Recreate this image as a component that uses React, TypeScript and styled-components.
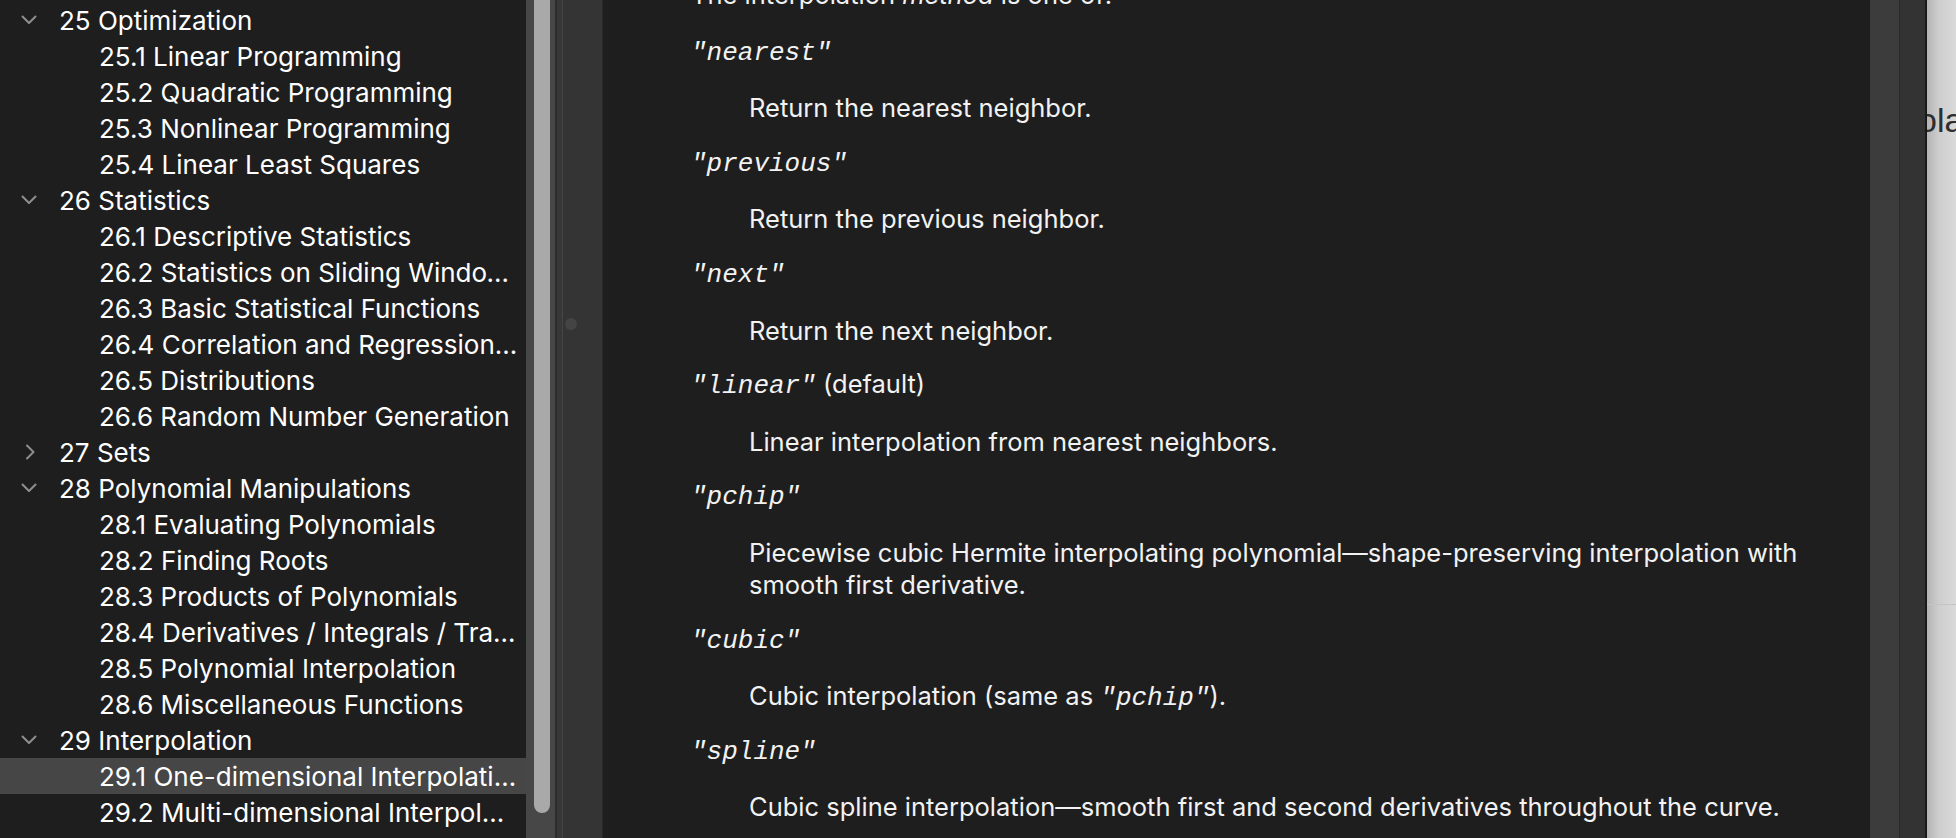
import styled, { createGlobalStyle } from "styled-components";
import type { ReactNode } from "react";
import { Fragment } from "react";

type TocItem = {
  label: string;
  level: 1 | 2;
  open?: boolean;
  selected?: boolean;
};

const TOC: TocItem[] = [
  { label: "25 Optimization", level: 1, open: true },
  { label: "25.1 Linear Programming", level: 2 },
  { label: "25.2 Quadratic Programming", level: 2 },
  { label: "25.3 Nonlinear Programming", level: 2 },
  { label: "25.4 Linear Least Squares", level: 2 },
  { label: "26 Statistics", level: 1, open: true },
  { label: "26.1 Descriptive Statistics", level: 2 },
  { label: "26.2 Statistics on Sliding Windows of Data", level: 2 },
  { label: "26.3 Basic Statistical Functions", level: 2 },
  { label: "26.4 Correlation and Regression Analysis", level: 2 },
  { label: "26.5 Distributions", level: 2 },
  { label: "26.6 Random Number Generation", level: 2 },
  { label: "27 Sets", level: 1, open: false },
  { label: "28 Polynomial Manipulations", level: 1, open: true },
  { label: "28.1 Evaluating Polynomials", level: 2 },
  { label: "28.2 Finding Roots", level: 2 },
  { label: "28.3 Products of Polynomials", level: 2 },
  { label: "28.4 Derivatives / Integrals / Transforms", level: 2 },
  { label: "28.5 Polynomial Interpolation", level: 2 },
  { label: "28.6 Miscellaneous Functions", level: 2 },
  { label: "29 Interpolation", level: 1, open: true },
  { label: "29.1 One-dimensional Interpolation", level: 2, selected: true },
  { label: "29.2 Multi-dimensional Interpolation", level: 2 },
  { label: "30 Geometry", level: 1, open: false },
];

const GlobalStyle = createGlobalStyle`
  html, body {
    margin: 0;
    padding: 0;
    background: #1e1e1e;
  }
  body {
    width: 1956px;
    height: 838px;
    overflow: hidden;
  }
`;

const Window = styled.div`
  display: flex;
  width: 1956px;
  height: 838px;
  overflow: hidden;
  background: #1e1e1e;
`;

/* ---------- table of contents ---------- */

const Sidebar = styled.nav`
  width: 526px;
  flex: none;
  box-sizing: border-box;
  padding-top: 2px;
  overflow: hidden;
  background: #1e1e1e;
  font-family: Inter, "Noto Sans", sans-serif;
  font-size: 26px;
  color: #ffffff;
`;

const Row = styled.div<{ $level: number; $selected?: boolean }>`
  display: flex;
  align-items: center;
  height: 36px;
  box-sizing: border-box;
  padding-left: ${(p) => (p.$level === 1 ? 21 : 99)}px;
  padding-right: 8px;
  background: ${(p) => (p.$selected ? "#464646" : "transparent")};
`;

const Twisty = styled.span`
  width: 16px;
  flex: none;
  display: flex;
  justify-content: center;
  align-items: center;
  margin-right: 22px;
`;

const Label = styled.span`
  flex: 1;
  min-width: 0;
  white-space: nowrap;
  overflow: hidden;
  text-overflow: ellipsis;
`;

const Chevron = ({ open }: { open?: boolean }) =>
  open ? (
    <svg width="16" height="10" viewBox="0 0 16 10">
      <polyline
        points="1.5,1.5 8,8 14.5,1.5"
        fill="none"
        stroke="#8e8e8e"
        strokeWidth="2"
        strokeLinecap="round"
        strokeLinejoin="round"
      />
    </svg>
  ) : (
    <svg width="11" height="16" viewBox="0 0 11 16" style={{ marginLeft: 3 }}>
      <polyline
        points="2,1.5 8.5,8 2,14.5"
        fill="none"
        stroke="#8e8e8e"
        strokeWidth="2"
        strokeLinecap="round"
        strokeLinejoin="round"
      />
    </svg>
  );

/* ---------- scroll bar and splitter ---------- */

const ScrollTrack = styled.div`
  width: 29px;
  flex: none;
  box-sizing: border-box;
  padding: 0 5px 25px 8px;
  display: flex;
  flex-direction: column;
  justify-content: flex-end;
  overflow: hidden;
  background: #474747;
`;

const ScrollThumb = styled.div`
  height: 900px;
  flex: none;
  background: #a9a9a9;
  border-radius: 0 0 8px 8px;
`;

const Splitter = styled.div`
  width: 48px;
  flex: none;
  box-sizing: border-box;
  border-left: 2px solid #2c2c2c;
  border-right: 1px solid #2a2a2a;
  padding: 318px 0 0 8px;
  background: linear-gradient(
    to right,
    #373737 0,
    #373737 5px,
    #444444 5px,
    #444444 6px,
    #343434 6px
  );
`;

const Grip = styled.div`
  width: 12px;
  height: 12px;
  border-radius: 50%;
  background: #444444;
`;

/* ---------- document ---------- */

const Content = styled.main`
  flex: 1;
  min-width: 0;
  overflow: hidden;
  box-sizing: border-box;
  padding: 0 30px 0 88px;
  background: #1e1e1e;
  font-family: Inter, "Liberation Sans", sans-serif;
  font-size: 25.5px;
  line-height: 32px;
  color: #f2f2f2;
`;

const Flow = styled.div`
  display: flex;
  flex-direction: column;
  gap: 23.6px;
  margin-top: -21px;
`;

const Para = styled.p`
  margin: 0;
`;

const Term = styled.div`
  margin: 0;
`;

const Desc = styled.div`
  margin: 0 0 -2px 58px;
  padding-top: 2px;
`;

const Code = styled.code`
  font-family: "Liberation Mono", "DejaVu Sans Mono", monospace;
  font-style: italic;
  font-size: 26px;
  line-height: 1;
`;

/* ---------- right edge ---------- */

const Gutter = styled.div<{ $width: number; $bg: string; $edge: string; $edgeWidth: number }>`
  width: ${(p) => p.$width}px;
  flex: none;
  box-sizing: border-box;
  background: ${(p) => p.$bg};
  border-right: ${(p) => p.$edgeWidth}px solid ${(p) => p.$edge};
`;

const Backdrop = styled.div`
  width: 29px;
  flex: none;
  overflow: hidden;
  display: flex;
  flex-direction: column;
  background: linear-gradient(to right, #b4b4b4 0, #cecece 12px, #dadada 29px);
`;

const BackdropTitle = styled.div`
  margin: 100px 0 0 -9px;
  white-space: nowrap;
  font-family: "Liberation Sans", Arial, sans-serif;
  font-size: 34px;
  line-height: 40px;
  color: #2e2e2e;
`;

const BackdropRule = styled.div`
  height: 1px;
  margin-top: 464px;
  background: #c4c4c4;
`;

type Method = { key: string; note?: string; desc: ReactNode };

const METHODS: Method[] = [
  { key: "nearest", desc: "Return the nearest neighbor." },
  { key: "previous", desc: "Return the previous neighbor." },
  { key: "next", desc: "Return the next neighbor." },
  { key: "linear", note: "(default)", desc: "Linear interpolation from nearest neighbors." },
  {
    key: "pchip",
    desc: "Piecewise cubic Hermite interpolating polynomial\u2014shape-preserving interpolation with smooth first derivative.",
  },
  {
    key: "cubic",
    desc: (
      <>
        Cubic interpolation (same as <Code>"pchip"</Code>).
      </>
    ),
  },
  {
    key: "spline",
    desc: "Cubic spline interpolation\u2014smooth first and second derivatives throughout the curve.",
  },
];

export default function App() {
  return (
    <>
      <GlobalStyle />
      <Window>
        <Sidebar>
          {TOC.map((item) => (
            <Row key={item.label} $level={item.level} $selected={item.selected}>
              {item.level === 1 && (
                <Twisty>
                  <Chevron open={item.open} />
                </Twisty>
              )}
              <Label>{item.label}</Label>
            </Row>
          ))}
        </Sidebar>

        <ScrollTrack>
          <ScrollThumb />
        </ScrollTrack>

        <Splitter>
          <Grip />
        </Splitter>

        <Content>
          <Flow>
            <Para>
              The interpolation <em>method</em> is one of:
            </Para>
            {METHODS.map((m) => (
              <Fragment key={m.key}>
                <Term>
                  <Code>"{m.key}"</Code>
                  {m.note && <> {m.note}</>}
                </Term>
                <Desc>{m.desc}</Desc>
              </Fragment>
            ))}
          </Flow>
        </Content>

        <Gutter $width={30} $bg="#3c3c3c" $edge="#2a2a2a" $edgeWidth={1} />
        <Gutter $width={27} $bg="#333333" $edge="#1a1a1a" $edgeWidth={2} />

        <Backdrop>
          <BackdropTitle>ola</BackdropTitle>
          <BackdropRule />
        </Backdrop>
      </Window>
    </>
  );
}
